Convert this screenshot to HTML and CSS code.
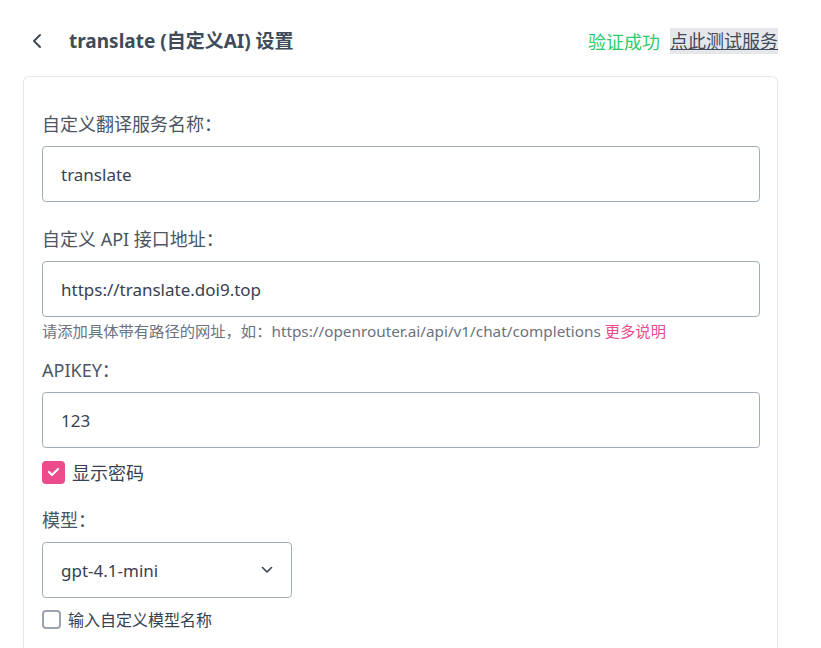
FILE: index.html
```html
<!DOCTYPE html>
<html lang="zh-CN">
<head>
<meta charset="utf-8">
<title>translate 设置</title>
<link rel="stylesheet" href="styles.css">
</head>
<body>
<div class="page">
  <header class="header">
    <div class="header-left">
      <span class="back" aria-label="返回">
        <svg width="12" height="16" viewBox="0 0 12 16"><path d="M9 2 L3 8 L9 14" fill="none" stroke="#3f4b59" stroke-width="2" stroke-linecap="round" stroke-linejoin="round"/></svg>
      </span>
      <h1 class="title">translate (自定义AI) 设置</h1>
    </div>
    <div class="header-right">
      <span class="ok">验证成功</span>
      <a class="test" href="#">点此测试服务</a>
    </div>
  </header>
  <main class="card">
    <div class="field">
      <label class="label">自定义翻译服务名称：</label>
      <div class="input">translate</div>
    </div>
    <div class="field">
      <label class="label">自定义 API 接口地址：</label>
      <div class="input">https://translate.doi9.top</div>
      <div class="help">请添加具体带有路径的网址，如：https://openrouter.ai/api/v1/chat/completions <a class="more" href="#">更多说明</a></div>
    </div>
    <div class="field field-api">
      <label class="label">APIKEY：</label>
      <div class="input">123</div>
      <div class="check check-on">
        <span class="box box-on">
          <svg width="13" height="10" viewBox="0 0 13 10"><path d="M2 5 L5 8 L11 2" fill="none" stroke="#fff" stroke-width="2.2" stroke-linecap="round" stroke-linejoin="round"/></svg>
        </span>
        <span class="check-text">显示密码</span>
      </div>
    </div>
    <div class="field">
      <label class="label">模型：</label>
      <div class="select">
        <span>gpt-4.1-mini</span>
        <svg width="12" height="8" viewBox="0 0 12 8"><path d="M1.5 1.5 L6 6 L10.5 1.5" fill="none" stroke="#374151" stroke-width="1.6" stroke-linecap="round" stroke-linejoin="round"/></svg>
      </div>
      <div class="check check-off">
        <span class="box box-off"></span>
        <span class="check-text small">输入自定义模型名称</span>
      </div>
    </div>
  </main>
</div>
</body>
</html>
```
FILE: styles.css
```css
* { box-sizing: border-box; }
html, body { margin: 0; padding: 0; background: #ffffff; }
body {
  font-family: "Noto Sans", "Noto Sans CJK SC", sans-serif;
  color: #374151;
}
.page {
  width: 755px;
  margin-left: 23px;
}
.header {
  display: flex;
  justify-content: space-between;
  align-items: center;
  height: 76px;
  padding-top: 6px;
}
.header-left {
  display: flex;
  align-items: center;
}
.back {
  display: flex;
  width: 46px;
  padding-left: 8px;
}
.title {
  margin: 0;
  font-size: 19px;
  font-weight: 700;
  color: #3f4b59;
  line-height: 26px;
}
.header-right {
  display: flex;
  align-items: center;
  gap: 10px;
  font-size: 18px;
}
.ok { color: #2ccb6a; }
.test {
  color: #3f4b59;
  text-decoration: underline;
  background: #e5e7eb;
  line-height: 26px;
  padding: 0;
}
.card {
  border: 1px solid #e5e7eb;
  border-bottom: none;
  border-radius: 6px 6px 0 0;
  padding: 35px 17px 40px 18px;
  min-height: 580px;
}
.field { display: flex; flex-direction: column; margin-bottom: 25px; }
.field-api { margin-bottom: 24px; }
.label {
  font-size: 18px;
  line-height: 24px;
  color: #4b5563;
  margin-bottom: 10px;
}
.input {
  height: 56px;
  border: 1px solid #a3adb8;
  border-radius: 4px;
  padding: 0 18px;
  display: flex;
  align-items: center;
  font-size: 17px;
  color: #374151;
}
.help {
  font-size: 15.3px;
  line-height: 22px;
  margin-top: 3px;
  margin-bottom: -9px;
  color: #6b7280;
}
.more { color: #ec4c8c; text-decoration: none; }
.check {
  display: flex;
  align-items: center;
}
.check-on { margin-top: 12px; height: 24px; }
.check-off { margin-top: 10px; height: 22px; }
.box {
  display: flex;
  align-items: center;
  justify-content: center;
  border-radius: 4px;
}
.box-on {
  width: 23px;
  height: 23px;
  background: #ec4c8c;
}
.box-off {
  width: 19px;
  height: 19px;
  border: 2px solid #9ca3af;
  border-radius: 4px;
}
.check-text {
  margin-left: 7px;
  font-size: 18px;
  color: #374151;
}
.check-text.small { font-size: 16px; margin-left: 7px; }
.select {
  width: 250px;
  height: 56px;
  border: 1px solid #a3adb8;
  border-radius: 4px;
  padding: 0 18px 0 18px;
  display: flex;
  align-items: center;
  justify-content: space-between;
  font-size: 17px;
  color: #374151;
}
```
